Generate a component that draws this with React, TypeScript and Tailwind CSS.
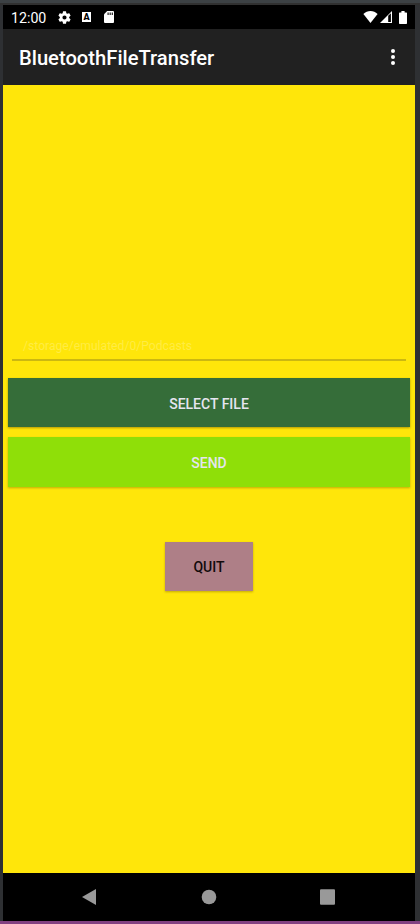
function StatusBar() {
  return (
    <header className="flex h-6 shrink-0 items-center bg-black pl-2 text-white">
      <span className="w-[45px] pt-0.5 text-[14.2px] leading-6 whitespace-nowrap">12:00</span>
      <svg className="ml-0.5 size-[13px]" viewBox="2 2 20 20" fill="#fff">
        <path d="M19.14 12.94a7.1 7.1 0 0 0 0-1.88l2.03-1.58a.5.5 0 0 0 .12-.61l-1.92-3.32a.5.5 0 0 0-.59-.22l-2.39.96a7 7 0 0 0-1.62-.94l-.36-2.54a.5.5 0 0 0-.48-.41h-3.84a.5.5 0 0 0-.47.41l-.36 2.54c-.59.24-1.13.57-1.62.94l-2.39-.96a.5.5 0 0 0-.59.22L2.74 8.87a.5.5 0 0 0 .12.61l2.03 1.58a7.1 7.1 0 0 0 0 1.88l-2.03 1.58a.5.5 0 0 0-.12.61l1.92 3.32c.12.22.37.29.59.22l2.39-.96c.5.38 1.03.7 1.62.94l.36 2.54c.05.24.24.41.48.41h3.84c.24 0 .44-.17.47-.41l.36-2.54c.59-.24 1.13-.56 1.62-.94l2.39.96c.22.08.47 0 .59-.22l1.92-3.32a.5.5 0 0 0-.12-.61l-2.01-1.58zM12 15.2a3.2 3.2 0 1 1 0-6.4 3.2 3.2 0 0 1 0 6.4z" />
      </svg>
      <span className="ml-[11px] flex h-[10px] w-[9px] items-center justify-center bg-white text-[9px] leading-none font-black text-black">
        A
      </span>
      <svg className="ml-[13px] h-3 w-[10px]" viewBox="0 0 10 12">
        <path d="M3.2 0H9a1 1 0 0 1 1 1v10a1 1 0 0 1-1 1H1a1 1 0 0 1-1-1V3.2z" fill="#fff" />
        <path d="M3.5 1.5h1.2V4H3.5zM5.6 1.5h1.2V4H5.6zM7.7 1.5h1.2V4H7.7z" fill="#222" />
      </svg>
      <svg className="ml-auto h-3 w-[15px]" viewBox="0 0 15 12" fill="#fff">
        <path d="M.4 3C4.3-.9 10.7-.9 14.6 3L7.5 12z" />
      </svg>
      <svg className="ml-0.5 h-3 w-3" viewBox="0 0 12 12">
        <path d="M12 0v12H0z" fill="#fff" />
        <path d="M8.2 4.8 10.9 2.2v8.8H8.2z" fill="#000" />
      </svg>
      <svg className="mr-2 ml-[7px] h-[13px] w-2" viewBox="0 0 8 13" fill="#fff">
        <path d="M2.4 0h3.2v1.4h1.7a.7.7 0 0 1 .7.7v10.2a.7.7 0 0 1-.7.7H.7a.7.7 0 0 1-.7-.7V2.1a.7.7 0 0 1 .7-.7h1.7z" />
      </svg>
    </header>
  );
}

function AppBar() {
  return (
    <div className="flex h-14 shrink-0 items-center justify-between bg-[#212121] pr-5 pl-4 text-white">
      <h1 className="pt-0.5 text-[20.2px] leading-6 font-medium whitespace-nowrap">BluetoothFileTransfer</h1>
      <button className="flex flex-col items-center gap-0.5" aria-label="More options">
        <span className="size-1 rounded-full bg-white" />
        <span className="size-1 rounded-full bg-white" />
        <span className="size-1 rounded-full bg-white" />
      </button>
    </div>
  );
}

function NavBar() {
  return (
    <nav className="h-12 shrink-0 bg-black">
      <svg className="block h-12 w-[412px]" viewBox="0 0 412 48" fill="#999">
        <path d="M93 16v16L79 24z" />
        <circle cx="206" cy="24" r="7.3" />
        <rect x="317" y="16.3" width="15" height="15.4" rx="1" />
      </svg>
    </nav>
  );
}

export default function App() {
  return (
    <div className="flex h-[924px] w-[420px] flex-col overflow-hidden bg-[#2e3033] font-[Roboto,sans-serif]">
      <div className="h-[3px] shrink-0 bg-[#3c4144]" />
      <div className="h-0.5 shrink-0 bg-[#303030]" />
      <div className="ml-[3px] flex h-[916px] w-[412px] shrink-0 flex-col">
        <StatusBar />
        <AppBar />
        <main className="flex flex-1 flex-col items-center bg-[#ffe60a] pt-[252px]">
          <div className="h-[24px] w-[394px] border-b-2 border-[#ccb811] pl-[11px] text-[12.15px] leading-[18px] text-[#ffec43]">
            /storage/emulated/0/Podcasts
          </div>
          <button className="mt-[17px] h-[49px] w-[402px] bg-[#356d39] pt-[3px] text-[14px] font-medium text-[#e5e5f0] shadow-[0_1px_2px_rgba(80,60,0,0.45)]">
            SELECT FILE
          </button>
          <button className="mt-[10px] h-[50px] w-[402px] bg-[#8fdf08] pt-0.5 text-[14px] font-medium text-[#e5e5f0] shadow-[0_1px_2px_rgba(80,60,0,0.35)]">
            SEND
          </button>
          <button className="mt-[55px] h-[49px] w-[88px] bg-[#ae7f87] pt-0.5 text-[14px] font-medium text-[#120b0c] shadow-[0_1px_2px_rgba(80,60,0,0.35)]">
            QUIT
          </button>
        </main>
        <NavBar />
      </div>
      <div className="h-[3px] shrink-0 bg-[#824181]" />
    </div>
  );
}
